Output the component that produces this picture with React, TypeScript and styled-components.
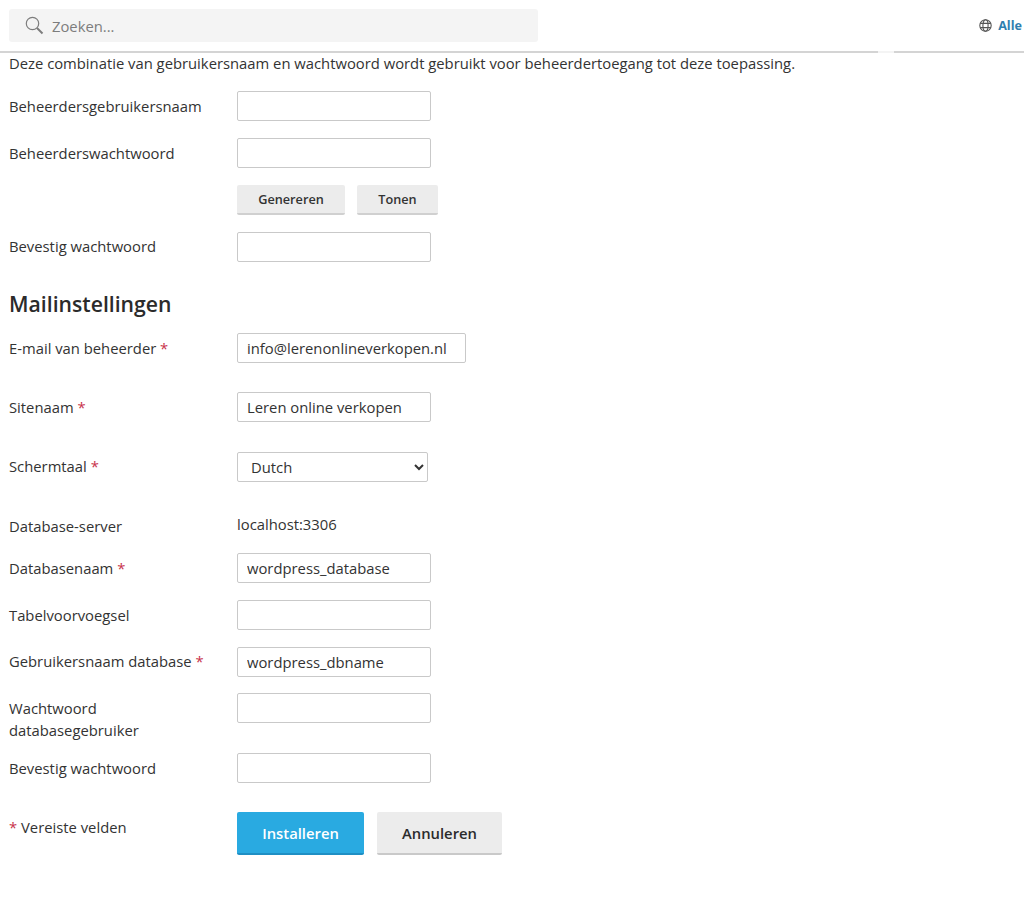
import styled, { createGlobalStyle } from "styled-components";

const GlobalStyle = createGlobalStyle`
  html, body {
    margin: 0;
    padding: 0;
    background: #fff;
    color: #333;
    font-family: "Open Sans", "Liberation Sans", sans-serif;
    font-size: 14.8px;
  }
`;

const Page = styled.div`
  width: 1024px;
  height: 903px;
  overflow: hidden;
`;
const TopBar = styled.header`
  position: relative;
  height: 53px;
  box-sizing: border-box;
  padding: 9px 2px 0 9px;
  display: flex;
  justify-content: space-between;
  align-items: flex-start;
  border-bottom: 2px solid #d4d4d4;
`;
const BorderNotch = styled.span`
  position: absolute;
  left: 878px;
  bottom: -2px;
  width: 16px;
  height: 2px;
  background: #f4f4f4;
`;
const SearchBox = styled.div`
  width: 529px;
  height: 33px;
  border-radius: 3px;
  background: #f4f4f4;
  display: flex;
  align-items: center;
  gap: 8px;
  padding-left: 16px;
  box-sizing: border-box;
  color: #7d7d7d;
`;
const LangLink = styled.div`
  display: flex;
  align-items: center;
  gap: 6px;
  height: 33px;
  font-size: 12.6px;
  font-weight: 700;
  color: #2f7fb0;
`;
const Content = styled.main`
  padding: 0 9px;
`;
const Intro = styled.p`
  margin: 0 0 18px;
  line-height: 20px;
`;
const Row = styled.div<{ $after?: number }>`
  display: grid;
  grid-template-columns: 228px auto;
  justify-content: start;
  align-items: start;
  margin-bottom: ${(p) => p.$after ?? 17}px;
`;
const Label = styled.label<{ $top?: number }>`
  padding-top: ${(p) => p.$top ?? 4}px;
  line-height: 22px;
  width: 205px;
`;
const Required = styled.span`
  color: #c8324b;
`;
const TextInput = styled.input<{ $w?: number }>`
  display: block;
  width: ${(p) => p.$w ?? 194}px;
  height: 30px;
  box-sizing: border-box;
  border: 1px solid #c9c9c9;
  border-radius: 2px;
  background: #fff;
  padding: 0 9px;
  font: inherit;
  color: #333;
  outline: none;
`;
const SelectInput = styled.select`
  display: block;
  width: 191px;
  height: 30px;
  box-sizing: border-box;
  border: 1px solid #c9c9c9;
  border-radius: 2px;
  background: #fff;
  padding: 0 9px;
  font: inherit;
  color: #333;
`;
const StaticValue = styled.div`
  line-height: 22px;
  padding-top: 1px;
`;
const ButtonRow = styled.div<{ $gap: number }>`
  display: flex;
  gap: ${(p) => p.$gap}px;
`;
const SmallButton = styled.button<{ $w: number }>`
  width: ${(p) => p.$w}px;
  height: 30px;
  border: 0;
  border-bottom: 2px solid #d0d0d0;
  border-radius: 2px;
  background: #ececec;
  color: #333;
  font-family: inherit;
  font-size: 12.7px;
  font-weight: 600;
  padding: 0;
`;
const Heading = styled.h2`
  margin: 0 0 15px;
  font-size: 21.2px;
  line-height: 28px;
  font-weight: 600;
  color: #2b2b2b;
`;
const MainButton = styled.button<{ $primary?: boolean; $w: number }>`
  width: ${(p) => p.$w}px;
  height: 43px;
  border: 0;
  border-bottom: 2px solid ${(p) => (p.$primary ? "#1f8fc4" : "#c9c9c9")};
  border-radius: 2px;
  background: ${(p) => (p.$primary ? "#29aae1" : "#ececec")};
  color: ${(p) => (p.$primary ? "#fff" : "#2b2b2b")};
  font-family: inherit;
  font-size: 14.8px;
  font-weight: 600;
  padding: 0;
`;

const SearchIcon = () => (
  <svg width="19" height="19" viewBox="0 0 19 19" fill="none" stroke="#7d7d7d">
    <circle cx="7.5" cy="7.5" r="6.2" strokeWidth="1.2" />
    <path d="M12 12l5.5 5.5" strokeWidth="2" />
  </svg>
);

const GlobeIcon = () => (
  <svg width="13" height="13" viewBox="0 0 13 13" fill="none" stroke="#555" strokeWidth="1.1">
    <circle cx="6.5" cy="6.5" r="5.7" />
    <ellipse cx="6.5" cy="6.5" rx="2.6" ry="5.7" />
    <path d="M1.2 4.4h10.6M1.2 8.6h10.6" />
  </svg>
);

const Star = () => <Required>*</Required>;

export default function App() {
  return (
    <Page>
      <GlobalStyle />
      <TopBar>
        <SearchBox>
          <SearchIcon />
          Zoeken...
        </SearchBox>
        <LangLink>
          <GlobeIcon />
          Alle
        </LangLink>
        <BorderNotch />
      </TopBar>
      <Content>
        <Intro>
          Deze combinatie van gebruikersnaam en wachtwoord wordt gebruikt voor
          beheerdertoegang tot deze toepassing.
        </Intro>
        <Row>
          <Label>Beheerdersgebruikersnaam</Label>
          <TextInput />
        </Row>
        <Row>
          <Label>Beheerderswachtwoord</Label>
          <TextInput />
        </Row>
        <Row>
          <span />
          <ButtonRow $gap={12}>
            <SmallButton $w={108}>Genereren</SmallButton>
            <SmallButton $w={81}>Tonen</SmallButton>
          </ButtonRow>
        </Row>
        <Row $after={28}>
          <Label $top={3}>Bevestig wachtwoord</Label>
          <TextInput />
        </Row>
        <Heading>Mailinstellingen</Heading>
        <Row $after={29}>
          <Label>
            E-mail van beheerder <Star />
          </Label>
          <TextInput $w={229} defaultValue="info@lerenonlineverkopen.nl" />
        </Row>
        <Row $after={30}>
          <Label>
            Sitenaam <Star />
          </Label>
          <TextInput defaultValue="Leren online verkopen" />
        </Row>
        <Row $after={30}>
          <Label $top={3}>
            Schermtaal <Star />
          </Label>
          <SelectInput defaultValue="Dutch">
            <option>Dutch</option>
          </SelectInput>
        </Row>
        <Row $after={16}>
          <Label $top={3}>Database-server</Label>
          <StaticValue>localhost:3306</StaticValue>
        </Row>
        <Row>
          <Label>
            Databasenaam <Star />
          </Label>
          <TextInput defaultValue="wordpress_database" />
        </Row>
        <Row>
          <Label>Tabelvoorvoegsel</Label>
          <TextInput />
        </Row>
        <Row $after={16}>
          <Label $top={3}>
            Gebruikersnaam database <Star />
          </Label>
          <TextInput defaultValue="wordpress_dbname" />
        </Row>
        <Row $after={12}>
          <Label>Wachtwoord databasegebruiker</Label>
          <TextInput />
        </Row>
        <Row $after={29}>
          <Label>Bevestig wachtwoord</Label>
          <TextInput />
        </Row>
        <Row>
          <Label>
            <Star /> Vereiste velden
          </Label>
          <ButtonRow $gap={13}>
            <MainButton $primary $w={127}>
              Installeren
            </MainButton>
            <MainButton $w={125}>Annuleren</MainButton>
          </ButtonRow>
        </Row>
      </Content>
    </Page>
  );
}
